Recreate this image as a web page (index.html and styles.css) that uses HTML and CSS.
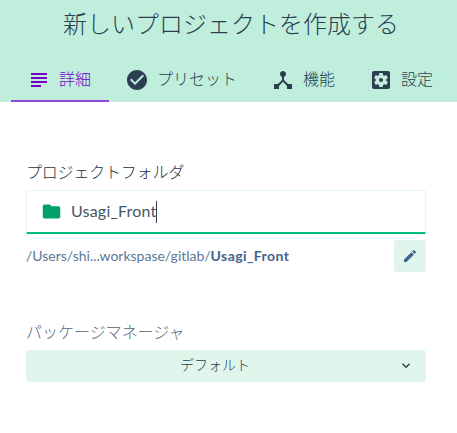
FILE: index.html
```html
<!DOCTYPE html>
<html lang="ja">
<head>
<meta charset="utf-8">
<title>新しいプロジェクトを作成する</title>
<link rel="stylesheet" href="styles.css">
</head>
<body>
<header class="header">
  <h1 class="title">新しいプロジェクトを作成する</h1>
  <nav class="tabs">
    <a class="tab active"><svg class="icon" viewBox="0 0 24 24"><path d="M14 17H4v2h10v-2zm6-8H4v2h16V9zM4 15h16v-2H4v2zM4 5v2h16V5H4z"/></svg><span>詳細</span></a>
    <a class="tab"><svg class="icon" viewBox="0 0 24 24"><path d="M12 2C6.480 2 2 6.480 2 12s4.480 10 10 10 10-4.480 10-10S17.520 2 12 2zm-2 15l-5-5 1.410-1.410L10 14.170l7.590-7.590L19 8l-9 9z"/></svg><span>プリセット</span></a>
    <a class="tab"><svg class="icon" viewBox="0 0 24 24"><path d="M17 16l-4-4V8.820C14.160 8.400 15 7.300 15 6c0-1.660-1.340-3-3-3S9 4.340 9 6c0 1.300.84 2.400 2 2.820V12l-4 4H3v5h5v-3.050l4-4.200 4 4.200V21h5v-5h-4z"/></svg><span>機能</span></a>
    <a class="tab"><svg class="icon" viewBox="0 0 24 24"><path d="M12 10c-1.100 0-2 .9-2 2s.9 2 2 2 2-.9 2-2-.9-2-2-2zm7-7H5c-1.110 0-2 .9-2 2v14c0 1.100.89 2 2 2h14c1.110 0 2-.9 2-2V5c0-1.100-.89-2-2-2zm-1.750 9c0 .23-.02.46-.05.68l1.480 1.160c.13.11.17.3.08.45l-1.400 2.420c-.09.15-.27.21-.43.15l-1.740-.7c-.36.28-.76.51-1.180.69l-.26 1.850c-.03.17-.18.3-.35.3h-2.800c-.17 0-.32-.13-.35-.29l-.26-1.850c-.43-.18-.82-.41-1.180-.69l-1.740.7c-.16.06-.34 0-.43-.15l-1.400-2.420c-.09-.15-.05-.34.08-.45l1.480-1.160c-.03-.23-.05-.46-.05-.69 0-.23.02-.46.05-.68l-1.480-1.160c-.13-.11-.17-.3-.08-.45l1.400-2.420c.09-.15.27-.21.43-.15l1.740.7c.36-.28.76-.51 1.180-.69l.26-1.850c.03-.17.18-.3.35-.3h2.800c.17 0 .32.13.35.29l.26 1.850c.43.18.82.41 1.180.69l1.740-.7c.16-.06.34 0 .43.15l1.400 2.420c.09.15.05.34-.08.45l-1.480 1.160c.03.23.05.46.05.69z"/></svg><span>設定</span></a>
  </nav>
</header>
<main class="content">
  <section class="field">
    <div class="label strong">プロジェクトフォルダ</div>
    <div class="input">
      <svg class="folder" viewBox="0 0 24 24"><path d="M10 4H4c-1.100 0-1.990.9-1.990 2L2 18c0 1.100.9 2 2 2h16c1.100 0 2-.9 2-2V8c0-1.100-.9-2-2-2h-8l-2-2z"/></svg>
      <span class="value">Usagi_Front</span><span class="caret"></span>
    </div>
    <div class="path-row">
      <div class="path"><span class="cwd">/Users/shi...workspase/gitlab/</span><b>Usagi_Front</b></div>
      <button class="edit" aria-label="編集"><svg viewBox="0 0 24 24"><path d="M3 17.250V21h3.750L17.810 9.940l-3.750-3.750L3 17.250zM20.710 7.040c.39-.39.39-1.020 0-1.410l-2.340-2.340c-.39-.39-1.020-.39-1.410 0l-1.830 1.830 3.750 3.750 1.830-1.830z"/></svg></button>
    </div>
  </section>
  <section class="field">
    <div class="label muted">パッケージマネージャ</div>
    <button class="select"><span>デフォルト</span><svg class="chevron" viewBox="0 0 24 24"><path d="M7.410 7.840L12 12.420l4.590-4.580L18 9.250l-6 6-6-6z"/></svg></button>
  </section>
</main>
</body>
</html>
```
FILE: styles.css
```css
* { box-sizing: border-box; }
body {
  margin: 0;
  background: #fff;
  color: #2c3e50;
  font: 300 16px/22px Lato, "Noto Sans CJK JP", sans-serif;
}
svg { display: block; flex: none; fill: currentColor; }
.header {
  height: 102px;
  padding: 8px 6px 0 11px;
  background: #c0eedd;
}
.title {
  margin: 0;
  height: 48px;
  font-size: 24px;
  font-weight: 300;
  line-height: 32px;
  text-align: center;
}
.tabs { display: flex; }
.tab {
  display: flex;
  align-items: center;
  gap: 8px;
  height: 46px;
  padding: 2px 18px 0 16px;
  white-space: nowrap;
}
.tab span { padding-bottom: 2px; }
.tab.active {
  color: #7700cb;
  box-shadow: inset 0 -2px #8f46d4;
}
.icon { width: 24px; height: 24px; }
.content { width: 400px; margin: 59px 0 0 26px; }
.label { height: 29px; }
.strong { color: #1f3042; letter-spacing: -0.2px; }
.muted { color: #566574; }
.input {
  display: flex;
  align-items: center;
  height: 44px;
  padding: 0 14px;
  border: 1px solid #e0f6ed;
  border-bottom: 2px solid #00be85;
  border-radius: 3px 3px 0 0;
}
.folder { width: 21px; height: 21px; color: #03a06b; }
.value {
  width: 85px;
  margin-left: 9px;
  padding-bottom: 1px;
  color: #465667;
  font-size: 16px;
  font-weight: 400;
  letter-spacing: 0.2px;
  white-space: nowrap;
}
.caret { width: 1px; height: 22px; background: #2c3e50; }
.path-row {
  display: flex;
  justify-content: space-between;
  align-items: center;
  margin-top: 6px;
  height: 32px;
  color: #42648b;
  font-size: 14px;
}
.cwd { color: #5a789a; font-weight: 400; }
.path b { font-weight: 700; letter-spacing: 0.4px; }
.edit, .select {
  border: 0;
  border-radius: 3px;
  background: #e0f6ed;
  color: inherit;
  font: inherit;
}
.edit {
  display: grid;
  place-items: center;
  width: 32px;
  height: 32px;
  padding: 0;
}
.edit svg { width: 16px; height: 16px; }
.field + .field { margin-top: 49px; }
.select {
  display: flex;
  align-items: center;
  width: 100%;
  height: 32px;
  padding: 0 12px;
  font-size: 14px;
}
.select span { flex: 1; padding: 0 6px 2px 0; text-align: center; }
.chevron { width: 16px; height: 16px; }
```
